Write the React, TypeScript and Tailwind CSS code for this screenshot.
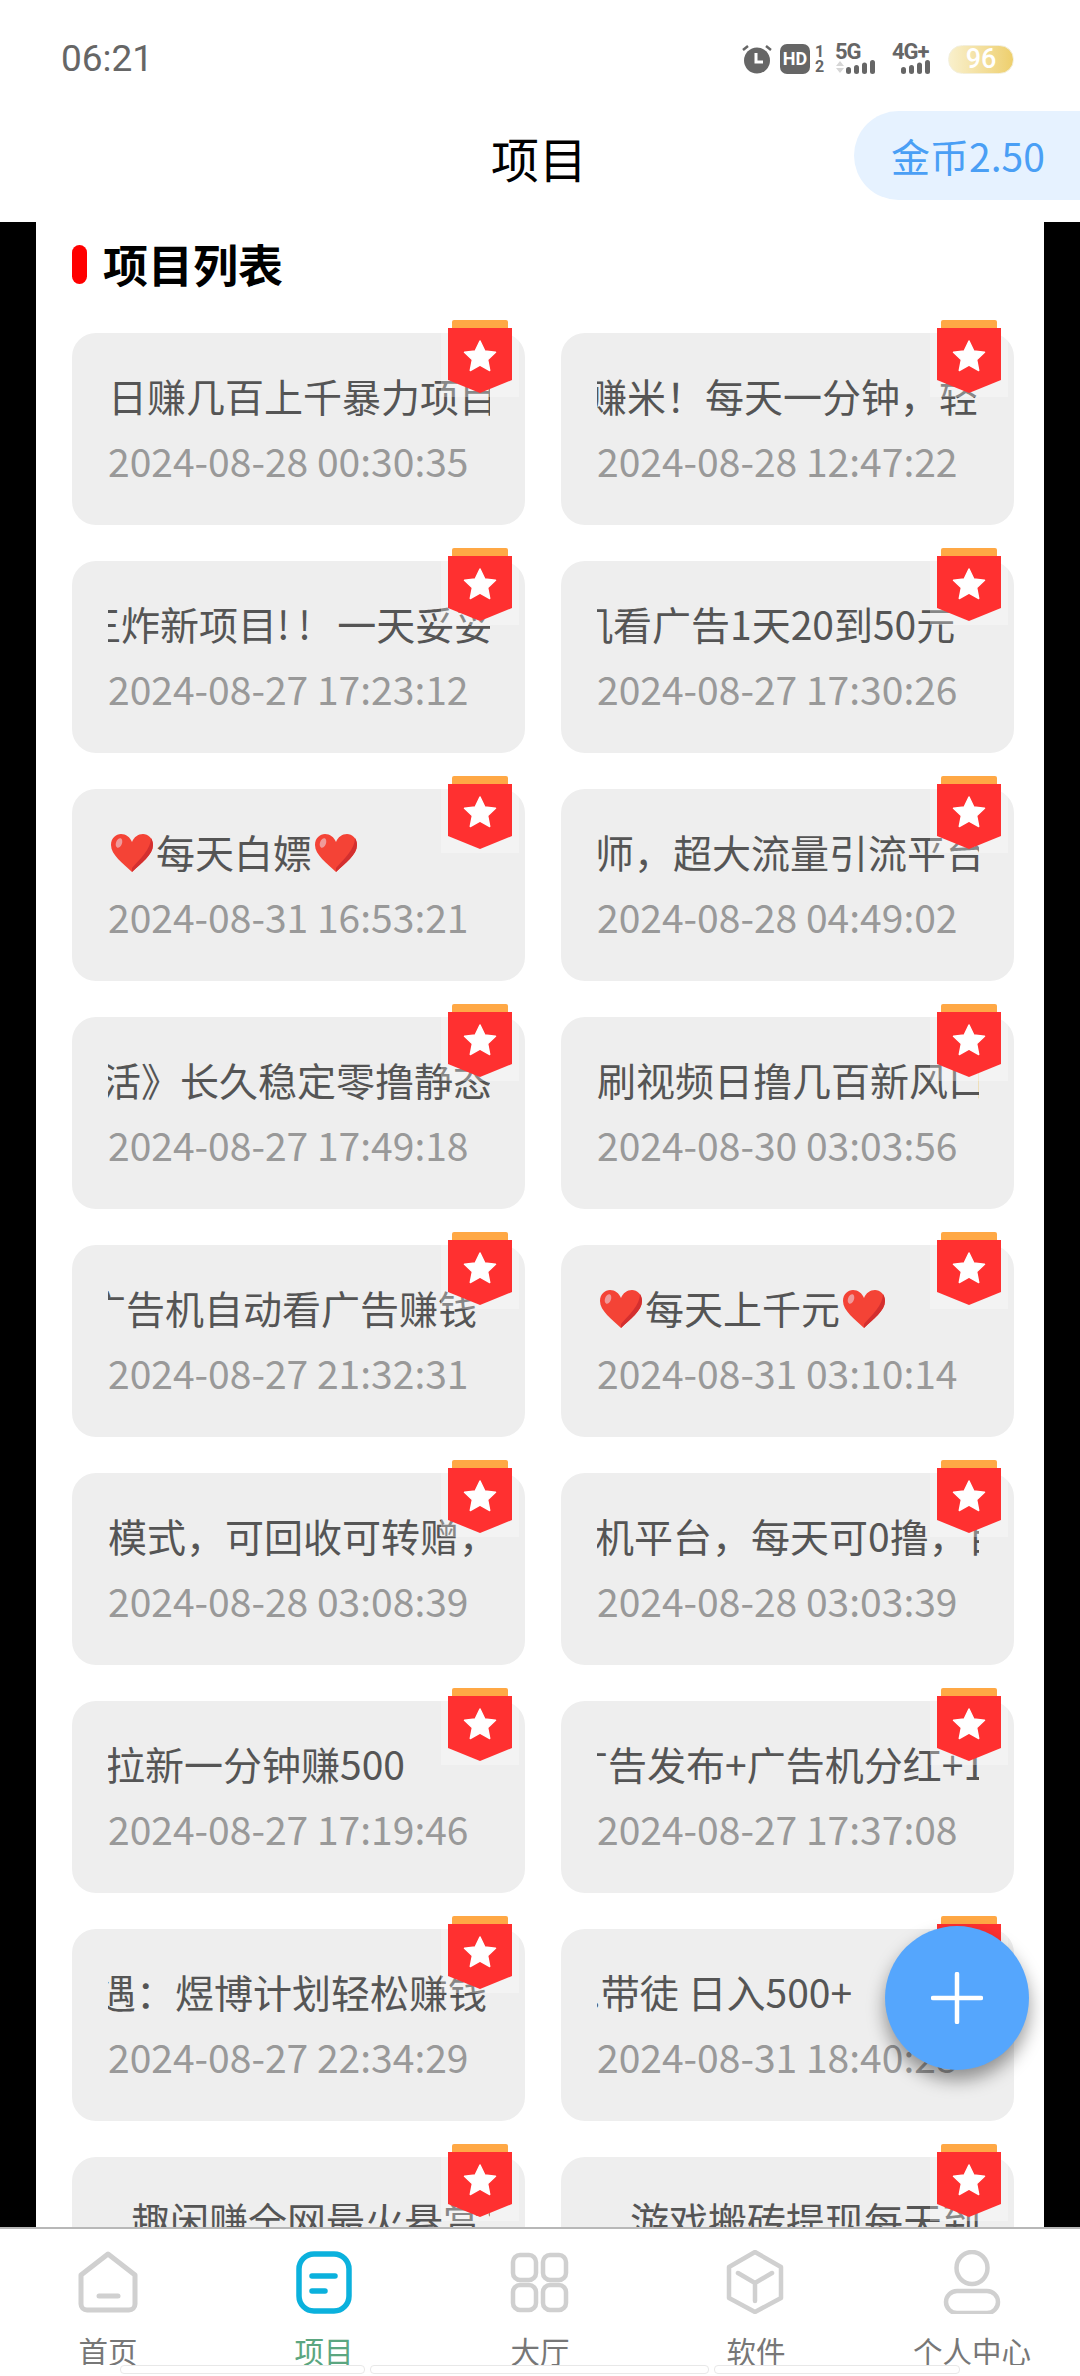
import React from 'react';

const CJK = "font-['Noto_Sans_CJK_SC','Noto_Sans',sans-serif]";

type Project = {
    title: string;
    date: string;
    offset: string;
    hearts?: boolean;
};

// \uFF0C \uFF01 \uFF1A are the full-width comma, exclamation mark and colon
const projects: Project[] = [
    { title: '日赚几百上千暴力项目', date: '2024-08-28 00:30:35', offset: 'ml-0' },
    { title: '赚米\uFF01每天一分钟\uFF0C轻松', date: '2024-08-28 12:47:22', offset: 'ml-[-9px]' },
    { title: '王炸新项目! !   一天妥妥', date: '2024-08-27 17:23:12', offset: 'ml-[-26px]' },
    { title: '机看广告1天20到50元', date: '2024-08-27 17:30:26', offset: 'ml-[-23px]' },
    { title: '每天白嫖', date: '2024-08-31 16:53:21', offset: 'ml-0', hearts: true },
    { title: '师\uFF0C超大流量引流平台', date: '2024-08-28 04:49:02', offset: 'ml-[-2px]' },
    { title: '活》长久稳定零撸静态', date: '2024-08-27 17:49:18', offset: 'ml-[-6px]' },
    { title: '刷视频日撸几百新风口', date: '2024-08-30 03:03:56', offset: 'ml-0' },
    { title: '广告机自动看广告赚钱', date: '2024-08-27 21:32:31', offset: 'ml-[-21px]' },
    { title: '每天上千元', date: '2024-08-31 03:10:14', offset: 'ml-0', hearts: true },
    { title: '模式\uFF0C可回收可转赠\uFF0C', date: '2024-08-28 03:08:39', offset: 'ml-0' },
    { title: '机平台\uFF0C每天可0撸\uFF0C目前', date: '2024-08-28 03:03:39', offset: 'ml-[-2px]' },
    { title: '拉新一分钟赚500', date: '2024-08-27 17:19:46', offset: 'ml-[-2px]' },
    { title: '广告发布+广告机分红+1', date: '2024-08-27 17:37:08', offset: 'ml-[-28px]' },
    { title: '遇\uFF1A煜博计划轻松赚钱', date: '2024-08-27 22:34:29', offset: 'ml-[-11px]' },
    { title: '.带徒 日入500+', date: '2024-08-31 18:40:28', offset: 'ml-[-7px]' },
    { title: '趣闲赚全网最火悬赏\uFF1A', date: '2024-08-27 22:34:29', offset: 'ml-[23px]' },
    { title: '游戏搬砖提现每天到', date: '2024-08-31 18:40:28', offset: 'ml-[33px]' },
];

const Heart = () => (
    <svg viewBox="0 0 48 40" className="inline-block w-[48px] h-[40px] shrink-0 align-[-5px]">
        <path d="M24 39C15 30 3 22 3 12 3 5 8 1 13 1c5 0 9 3 11 8 2-5 6-8 11-8 5 0 10 4 10 11 0 10-12 18-21 27Z" fill="#f44336" />
        <path d="M24 39c9-9 21-17 21-27 0-3-1-5-2-7 0 11-11 21-19 30Z" fill="#d32f2f" />
        <ellipse cx="11" cy="10" rx="3" ry="5" fill="#ef9a9a" transform="rotate(20 11 10)" />
    </svg>
);

const Ribbon = () => (
    <svg viewBox="0 0 78 79" className="absolute right-[6px] top-[-15px] w-[78px] h-[79px]">
        <rect width="78" height="79" fill="#ffffff" fillOpacity="0.3" />
        <path d="M11 10V4a2 2 0 0 1 2-2h52a2 2 0 0 1 2 2v6Z" fill="#ffa845" />
        <path d="M7 10h64v52L39 75 7 62Z" fill="#ff3030" />
        <path d="M39 23l4.8 10 10.7 1.3-7.9 7.4 2.1 10.8L39 47.2l-9.7 5.3 2.1-10.8-7.9-7.4L34.2 33Z" fill="#ffffff" stroke="#ffffff" strokeWidth="1.5" strokeLinejoin="round" />
    </svg>
);

const ProjectCard: React.FC<{ project: Project }> = ({ project }) => (
    <div className="relative h-[192px] rounded-[24px] bg-[#eeeeee] pt-[30px] px-[36px]">
        <Ribbon />
        <div className="w-[382px] h-[65px] overflow-hidden leading-[64px] text-[39px] text-[#555555] whitespace-pre">
            <div className={project.offset}>
                {project.hearts && <Heart />}
                {project.title}
                {project.hearts && <Heart />}
            </div>
        </div>
        <div className="h-[64px] leading-[64px] text-[39px] text-[#999999] whitespace-nowrap">{project.date}</div>
    </div>
);

const StatusIcons = () => (
    <div className="flex items-center h-[30px] font-['Roboto',sans-serif] font-bold text-[#666666]">
        <svg viewBox="0 0 30 30" className="w-[30px] h-[30px]">
            <circle cx="15" cy="16.5" r="13" fill="#666666" />
            <path d="M14 9v9h7" stroke="#ffffff" strokeWidth="3" fill="none" />
            <path d="M1 6l5-4M29 6l-5-4" stroke="#666666" strokeWidth="2.5" />
        </svg>
        <div className="ml-[8px] w-[30px] h-[30px] rounded-[7px] bg-[#666666] text-white text-[18px] leading-[30px] text-center">HD</div>
        <div className="ml-[4px] w-[11px] text-[16px] leading-[15px] text-center">
            <div>1</div>
            <div>2</div>
        </div>
        <div className="ml-[10px] w-[44px]">
            <div className="text-[22px] leading-[16px] tracking-[-1px]">5G</div>
            <svg viewBox="0 0 44 14" className="w-[44px] h-[14px]">
                <path d="M1 6l4-5 4 5ZM1 8h8l-4 5Z" fill="#d6d6d6" />
                <rect x="11" y="7" width="5" height="7" rx="2.5" fill="#666666" />
                <rect x="19" y="5" width="5" height="9" rx="2.5" fill="#666666" />
                <rect x="27" y="2.5" width="5" height="11.5" rx="2.5" fill="#666666" />
                <rect x="35" y="0" width="5" height="14" rx="2.5" fill="#666666" />
            </svg>
        </div>
        <div className="ml-[13px] w-[44px]">
            <div className="text-[22px] leading-[16px] tracking-[-1px]">4G+</div>
            <svg viewBox="0 0 44 14" className="w-[44px] h-[14px]">
                <rect x="9" y="7" width="5" height="7" rx="2.5" fill="#666666" />
                <rect x="17" y="5" width="5" height="9" rx="2.5" fill="#666666" />
                <rect x="25" y="2.5" width="5" height="11.5" rx="2.5" fill="#666666" />
                <rect x="33" y="0" width="5" height="14" rx="2.5" fill="#666666" />
            </svg>
        </div>
        <div className="ml-[12px] w-[66px] h-[29px] rounded-full bg-gradient-to-r from-[#f9f0cc] to-[#eecf6c] border border-[#f3efdc] text-white text-[27px] leading-[27px] text-center font-medium">96</div>
    </div>
);

const ICON_GRAY = '#d0d0d0';

const tabs = [
    {
        label: '首页',
        active: false,
        icon: (
            <svg viewBox="0 0 64 64" className="w-[64px] h-[64px]" fill="none" stroke={ICON_GRAY} strokeWidth="5" strokeLinecap="round" strokeLinejoin="round">
                <path d="M32 4 59 25v29a6 6 0 0 1-6 6H11a6 6 0 0 1-6-6V25Z" />
                <path d="M23 46h19" />
            </svg>
        ),
    },
    {
        label: '项目',
        active: true,
        icon: (
            <svg viewBox="0 0 64 64" className="w-[64px] h-[64px]" fill="none" stroke="#0bb1dd" strokeWidth="5.5" strokeLinecap="round">
                <rect x="7" y="4" width="50" height="57" rx="15" />
                <path d="M20 26h23M20 41h13" />
            </svg>
        ),
    },
    {
        label: '大厅',
        active: false,
        icon: (
            <svg viewBox="0 0 64 64" className="w-[64px] h-[64px]" fill="none" stroke={ICON_GRAY} strokeWidth="4.5">
                <rect x="5" y="5" width="23" height="25" rx="7" />
                <rect x="35" y="5" width="23" height="25" rx="7" />
                <rect x="5" y="35" width="23" height="25" rx="7" />
                <rect x="35" y="35" width="23" height="25" rx="7" />
            </svg>
        ),
    },
    {
        label: '软件',
        active: false,
        icon: (
            <svg viewBox="0 0 64 64" className="w-[64px] h-[64px]" fill="none" stroke={ICON_GRAY} strokeWidth="4.5" strokeLinecap="round" strokeLinejoin="round">
                <path d="M31 2 57 17v31L31 62 5 48V17Z" />
                <path d="M14 23l17 10 17-10M31 33v18" />
            </svg>
        ),
    },
    {
        label: '个人中心',
        active: false,
        icon: (
            <svg viewBox="0 0 64 64" className="w-[64px] h-[64px]" fill="none" stroke={ICON_GRAY} strokeWidth="4.5">
                <ellipse cx="32" cy="18" rx="15.5" ry="16" />
                <rect x="6" y="41" width="52" height="22" rx="11" />
            </svg>
        ),
    },
];

const TabBar = () => (
    <div className="relative bg-white border-t-2 border-[#b8b8b8] h-[149px] shrink-0">
        <div className="grid grid-cols-5 pt-[21px]">
            {tabs.map((tab) => (
                <div key={tab.label} className="flex flex-col items-center">
                    {tab.icon}
                    <div className={`mt-[16px] h-[35px] overflow-hidden text-[29.5px] leading-[40px] ${tab.active ? 'text-[#5ba680]' : 'text-[#777777]'}`}>
                        {tab.label}
                    </div>
                </div>
            ))}
        </div>
        <div className="flex gap-[5px] pl-[120px]">
            <div className="w-[245px] h-[9px] rounded-[4px] bg-white border border-[#e8e8e8]" />
            <div className="w-[339px] h-[9px] rounded-[4px] bg-white border border-[#e8e8e8]" />
            <div className="w-[246px] h-[9px] rounded-[4px] bg-white border border-[#e8e8e8]" />
        </div>
    </div>
);

export default function App() {
    return (
        <div className={`relative w-[1080px] h-[2376px] flex flex-col overflow-hidden bg-white ${CJK}`}>
            {/* Status bar */}
            <div className="h-[111px] shrink-0 flex items-start justify-between pt-[44px] pl-[61px] pr-[66px]">
                <span className="font-['Roboto',sans-serif] text-[37px] leading-[30px] text-[#666666]">06:21</span>
                <StatusIcons />
            </div>

            {/* Nav */}
            <div className="relative h-[111px] shrink-0 flex justify-center items-center pb-[19px] pr-[2px]">
                <span className="text-[48px] text-black">项目</span>
                <div className="absolute right-0 top-0 w-[226px] h-[89px] rounded-l-[45px] bg-[#e6f2ff] text-[#4a9ff5] text-[39px] leading-[89px] pl-[37px]">
                    金币2.50
                </div>
            </div>

            {/* List */}
            <div className="flex-1 min-h-0 overflow-hidden bg-black px-[36px]">
                <div className="h-full bg-white pl-[36px] pr-[30px]">
                    <div className="flex items-center h-[111px] pb-[27px]">
                        <div className="w-[15px] h-[39px] rounded-full bg-[#ff0000]" />
                        <h2 className="ml-[16px] text-[45px] font-bold text-black">项目列表</h2>
                    </div>
                    <div className="grid grid-cols-2 gap-[36px]">
                        {projects.map((p) => (
                            <ProjectCard key={p.title} project={p} />
                        ))}
                    </div>
                </div>
            </div>

            <TabBar />

            {/* Floating add button */}
            <div className="absolute left-[885px] top-[1926px] w-[144px] h-[144px] rounded-full bg-[#55a6fd] shadow-[0_10px_18px_rgba(0,0,0,0.4)] flex items-center justify-center">
                <svg viewBox="0 0 52 52" className="w-[52px] h-[52px]" fill="none" stroke="#ffffff" strokeWidth="4.5" strokeLinecap="round">
                    <path d="M26 2v48M2 26h48" />
                </svg>
            </div>
        </div>
    );
}
